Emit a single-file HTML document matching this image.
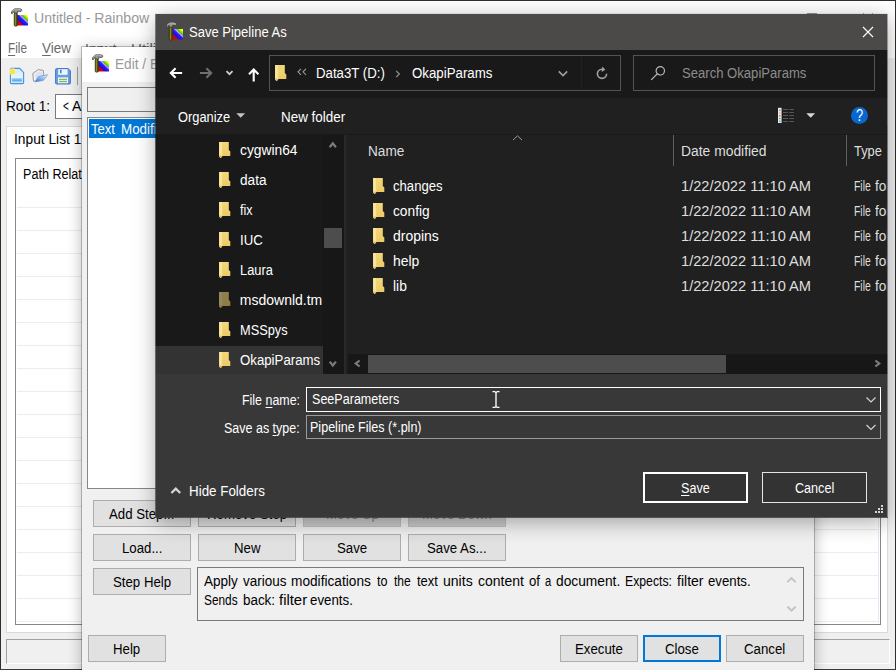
<!DOCTYPE html>
<html><head><meta charset="utf-8"><title>Save Pipeline As</title>
<style>
*{box-sizing:border-box;margin:0;padding:0}
html,body{width:896px;height:670px;overflow:hidden;background:#fff}
body{font-family:"Liberation Sans",sans-serif;font-size:14px;line-height:18px;position:relative}
.a{position:absolute}
.t{position:absolute;white-space:nowrap;transform-origin:0 50%;height:18px}
u{text-decoration:underline;text-underline-offset:1.5px;text-decoration-thickness:1px}
#main{position:absolute;left:0;top:0;width:896px;height:670px;background:#f0f0f0;overflow:hidden}
#edit{position:absolute;left:82px;top:47px;width:732px;height:640px;background:#f0f0f0;
 box-shadow:0 0 0 1px rgba(0,0,0,.22),0 2px 14px 0 rgba(0,0,0,.30)}
#save{position:absolute;left:156px;top:14px;width:731px;height:503px;background:#383838;overflow:hidden;
 box-shadow:0 0 0 1px rgba(0,0,0,.06),0 5px 20px 0 rgba(0,0,0,.34)}
.btn{position:absolute;background:#e1e1e1;border:1px solid #adadad}
.dbtn{position:absolute;background:#333;border:1px solid #e6e6e6}
#tree{position:absolute;left:0;top:120px;width:188px;height:240px;background:#191919;overflow:hidden}
#flist{position:absolute;left:192px;top:120px;width:540px;height:240px;background:#202020;overflow:hidden}
</style></head><body>

<div id="main">
  <div class="a" style="left:0;top:0;width:896px;height:58px;background:#fff"></div>
  <div class="a" style="left:807px;top:13px;width:10px;height:1px;background:#999"></div><div class="a" style="left:863px;top:13px;width:1px;height:1px;background:#aaa"></div><div class="a" style="left:872px;top:13px;width:1px;height:1px;background:#aaa"></div>
  <!-- app icon -->
  <svg class="a" style="left:10px;top:7px" width="20" height="21" viewBox="0 0 20 21">
    <defs><linearGradient id="rb" x1="0" y1="1" x2="1" y2="0">
      <stop offset="0" stop-color="#e00000"/><stop offset=".26" stop-color="#c80020"/><stop offset=".36" stop-color="#1010e0"/><stop offset=".56" stop-color="#2828ff"/><stop offset=".63" stop-color="#ff90ff"/><stop offset=".70" stop-color="#20d020"/><stop offset=".82" stop-color="#b0f000"/><stop offset=".9" stop-color="#ffff20"/><stop offset="1" stop-color="#ffff60"/></linearGradient></defs>
    <rect x="7" y="8" width="11" height="10.5" fill="url(#rb)"/>
    <path d="M1.3 6.4 C1.4 3.4 4 1.3 7.5 1.5 L10.4 1.9 C11.4 2.1 11.9 2.8 11.7 3.6 C11.5 4.4 10.8 4.7 9.9 4.5 L7.6 4.2 L7.6 6.2 L4.1 6.2 L4.3 4.3 C3.3 4.7 2.7 5.5 2.3 6.7 Z" fill="#9a9a9a" stroke="#333" stroke-width=".7"/>
    <path d="M2.2 4 C3.4 2.4 5.4 1.8 7.6 2 L10.4 2.4" fill="none" stroke="#c9c9c9" stroke-width=".8"/>
    <rect x="4.1" y="6" width="3.3" height="13.2" rx="1.3" fill="#55550f" stroke="#2a2a08" stroke-width=".5"/>
    <rect x="5" y="6.5" width="1" height="12" fill="#8a8a2c"/>
  </svg>
  <!-- toolbar icons -->
  <svg class="a" style="left:9px;top:67px" width="16" height="18" viewBox="0 0 16 18">
    <defs><linearGradient id="pg" x1="0" y1="0" x2="0" y2="1"><stop offset="0" stop-color="#d4e9fb"/><stop offset="1" stop-color="#f4faff"/></linearGradient></defs>
    <path d="M2.2 1.4 H10.6 L14.6 5.4 V15.6 Q14.6 16.6 13.6 16.6 H2.2 Q1.4 16.6 1.4 15.6 V2.2 Q1.4 1.4 2.2 1.4 Z" fill="url(#pg)" stroke="#4d8fd8" stroke-width="1.1"/>
    <rect x="2.6" y="11.2" width="10.8" height="4.2" fill="#8fcdf6"/>
    <rect x="3.4" y="12.6" width="9.2" height="1.2" fill="#4fa8ea"/>
    <circle cx="3.4" cy="4.6" r="3.6" fill="#fdf6a0" opacity=".7"/>
    <circle cx="3.4" cy="4.6" r="2.6" fill="#f5e646"/>
  </svg>
  <svg class="a" style="left:32px;top:68px" width="17" height="16" viewBox="0 0 17 16">
    <defs><linearGradient id="og" x1="0" y1="1" x2="1" y2="0"><stop offset="0" stop-color="#1f6fe0"/><stop offset=".45" stop-color="#7fb2f0"/><stop offset="1" stop-color="#f4f8fd"/></linearGradient></defs>
    <path d="M.8 5.4 L6.4 1.6 L11.3 2.5 L11.7 6.6 L3.7 13.4 L1.5 13 Z" fill="#f3f5f7" stroke="#878d96" stroke-width=".9"/>
    <path d="M2.2 6.2 L6.6 3.2 L10.4 3.8 L10.6 6.6 L4 11.6 Z" fill="#dfe4ea"/>
    <path d="M2.8 13.9 L6.4 8.5 L15.6 6.7 L11.3 12.5 Z" fill="url(#og)" stroke="#7a96bd" stroke-width=".7"/>
  </svg>
  <svg class="a" style="left:55px;top:68px" width="16" height="17" viewBox="0 0 16 17">
    <path d="M1.6 .6 H13.2 L15.4 2.8 V15 Q15.4 16 14.4 16 H1.6 Q.6 16 .6 15 V1.6 Q.6 .6 1.6 .6 Z" fill="#6a9de2" stroke="#3f76c8" stroke-width="1"/>
    <rect x="3.2" y="1.2" width="9.4" height="5.6" fill="#eef4fc"/>
    <rect x="5" y="1.8" width="1.6" height="3.4" fill="#4a7fd0"/>
    <rect x="3" y="9.4" width="10" height="5.8" fill="#f4f6f8"/>
    <rect x="4" y="10.8" width="8" height="1.3" fill="#7cc05a"/><rect x="4" y="12.9" width="8" height="1.3" fill="#7cc05a"/>
  </svg>
  <div class="a" style="left:77px;top:67px;width:1px;height:18px;background:#a0a0a0"></div>
  <!-- root text box -->
  <div class="a" style="left:55px;top:94px;width:200px;height:25px;background:#fff;border:1px solid #7a7a7a"></div>
  <!-- tab control -->
  <div class="a" style="left:6px;top:126px;width:882px;height:507px;background:#fff;border:1px solid #dadada"></div>
  <!-- table -->
  <div class="a" style="left:15px;top:158px;width:866px;height:467px;background:#fff;border:1px solid #828790"><div class="a" style="left:1px;top:26px;width:862px;height:438px;background-image:repeating-linear-gradient(to bottom,transparent 0,transparent 22px,#ececec 22px,#ececec 23px)"></div></div>
  <div class="a" style="left:878px;top:160px;width:1px;height:463px;background:#e3ecf6"></div>
  <!-- status bar -->
  <div class="a" style="left:6px;top:639px;width:884px;height:25px;background:#f0f0f0;border-top:1px solid #a0a0a0;border-left:1px solid #a0a0a0;border-right:1px solid #fff;border-bottom:1px solid #fff"></div>
<span class="t" style="top:9px;left:33.9px;color:#999;transform:scaleX(1.007);">Untitled - Rainbow</span>
<span class="t" style="top:39px;left:7.8px;color:#6a6a6a;transform:scaleX(0.839);"><u>F</u>ile</span>
<span class="t" style="top:39px;left:41.6px;color:#6a6a6a;transform:scaleX(0.963);"><u>V</u>iew</span>
<span class="t" style="top:40px;left:84.8px;color:#6a6a6a;transform:scaleX(1.006);"><u>I</u>nput</span>
<span class="t" style="top:40px;left:131.0px;color:#6a6a6a;transform:scaleX(1.078);"><u>U</u>tilities</span>
<span class="t" style="top:97px;left:5.8px;color:#000;transform:scaleX(0.976);">Root 1:</span>
<span class="t" style="top:97px;left:63.3px;color:#000;transform:scaleX(0.713);">&lt;</span>
<span class="t" style="top:97px;left:72.2px;color:#000;transform:scaleX(1.008);">Auto&gt;</span>
<span class="t" style="top:130px;left:14.0px;color:#000;transform:scaleX(0.983);">Input List 1</span>
<span class="t" style="top:165px;left:22.8px;color:#000;transform:scaleX(0.900);">Path Relative</span>
  <div class="a" style="left:0;top:0;width:896px;height:670px;border:1px solid #2e2e2e;border-bottom-color:#3a3a3a"></div>
</div>

<div id="edit">
  <div class="a" style="left:0;top:0;width:732px;height:35px;background:#fff"></div>
  <svg class="a" style="left:9px;top:5.8px" width="20" height="21" viewBox="0 0 20 21">
    <rect x="7" y="8" width="11" height="10.5" fill="url(#rb)"/>
    <path d="M1.3 6.4 C1.4 3.4 4 1.3 7.5 1.5 L10.4 1.9 C11.4 2.1 11.9 2.8 11.7 3.6 C11.5 4.4 10.8 4.7 9.9 4.5 L7.6 4.2 L7.6 6.2 L4.1 6.2 L4.3 4.3 C3.3 4.7 2.7 5.5 2.3 6.7 Z" fill="#9a9a9a" stroke="#333" stroke-width=".7"/>
    <path d="M2.2 4 C3.4 2.4 5.4 1.8 7.6 2 L10.4 2.4" fill="none" stroke="#c9c9c9" stroke-width=".8"/>
    <rect x="4.1" y="6" width="3.3" height="13.2" rx="1.3" fill="#55550f" stroke="#2a2a08" stroke-width=".5"/>
    <rect x="5" y="6.5" width="1" height="12" fill="#8a8a2c"/>
  </svg>
  <div class="a" style="left:5px;top:40px;width:720px;height:25px;background:#f0f0f0;border:1px solid #7a7a7a"></div>
  <div class="a" style="left:5px;top:70px;width:720px;height:372px;background:#fff;border:1px solid #828790"></div>
  <div class="a" style="left:7px;top:72px;width:716px;height:19px;background:#0078d7"></div>
  <div class="btn" style="left:11px;top:453px;width:98px;height:27px"></div>
  <div class="btn" style="left:116px;top:453px;width:98px;height:27px"></div>
  <div class="btn" style="left:221px;top:453px;width:98px;height:27px;background:#cccccc;border-color:#bfbfbf"></div>
  <div class="btn" style="left:326px;top:453px;width:98px;height:27px;background:#cccccc;border-color:#bfbfbf"></div>
  <div class="btn" style="left:11px;top:487px;width:98px;height:27px"></div>
  <div class="btn" style="left:116px;top:487px;width:98px;height:27px"></div>
  <div class="btn" style="left:221px;top:487px;width:98px;height:27px"></div>
  <div class="btn" style="left:326px;top:487px;width:98px;height:27px"></div>
  <div class="btn" style="left:11px;top:521px;width:98px;height:27px"></div>
  <div class="a" style="left:115px;top:520.3px;width:607px;height:54px;background:#f0f0f0;border:1px solid #7a7a7a"></div>
  <svg class="a" style="left:699.2px;top:521px" width="21" height="51" viewBox="0 0 21 51">
    <path d="M6.3 14.2 L10.5 10 L14.7 14.2 M6.3 38.5 L10.5 42.7 L14.7 38.5" fill="none" stroke="#c4c4c4" stroke-width="1.9"/>
  </svg>
  <div class="btn" style="left:6.4px;top:588px;width:77.4px;height:27px"></div>
  <div class="btn" style="left:478.2px;top:588px;width:77.6px;height:27px"></div>
  <div class="btn" style="left:561px;top:588px;width:78px;height:27px;border:2px solid #0078d7"></div>
  <div class="btn" style="left:644.2px;top:588px;width:77.6px;height:27px"></div>
<span class="t" style="top:8px;left:32.9px;color:#999;transform:scaleX(0.976);">Edit / Execute Pipeline</span>
<span class="t" style="top:73px;left:9.0px;color:#fff;transform:scaleX(0.931);">Text</span>
<span class="t" style="top:73px;left:38.7px;color:#fff;transform:scaleX(0.957);">Modification</span>
<span class="t" style="top:458px;left:27.4px;color:#000;transform:scaleX(0.945);">Add Step...</span>
<span class="t" style="top:458px;left:124.8px;color:#000;transform:scaleX(0.945);">Remove Step</span>
<span class="t" style="top:458px;left:243.5px;color:#838383;transform:scaleX(0.945);">Move Up</span>
<span class="t" style="top:458px;left:340.0px;color:#838383;transform:scaleX(0.945);">Move Down</span>
<span class="t" style="top:492px;left:39.7px;color:#000;transform:scaleX(0.945);">Load...</span>
<span class="t" style="top:492px;left:151.8px;color:#000;transform:scaleX(0.945);">New</span>
<span class="t" style="top:492px;left:254.9px;color:#000;transform:scaleX(0.945);">Save</span>
<span class="t" style="top:492px;left:345.2px;color:#000;transform:scaleX(0.945);">Save As...</span>
<span class="t" style="top:526px;left:31.2px;color:#000;transform:scaleX(0.945);">Step Help</span>
<span class="t" style="top:593px;left:31.4px;color:#000;transform:scaleX(0.945);">Help</span>
<span class="t" style="top:593px;left:492.9px;color:#000;transform:scaleX(0.945);">Execute</span>
<span class="t" style="top:593px;left:583.0px;color:#000;transform:scaleX(0.945);">Close</span>
<span class="t" style="top:593px;left:662.2px;color:#000;transform:scaleX(0.945);">Cancel</span>
<span class="t" style="top:525px;left:122.2px;color:#000;transform:scaleX(0.966);">Apply</span>
<span class="t" style="top:525px;left:161.0px;color:#000;transform:scaleX(0.964);">various</span>
<span class="t" style="top:525px;left:208.9px;color:#000;transform:scaleX(0.977);">modifications</span>
<span class="t" style="top:525px;left:294.5px;color:#000;transform:scaleX(0.900);">to</span>
<span class="t" style="top:525px;left:311.5px;color:#000;transform:scaleX(0.863);">the</span>
<span class="t" style="top:525px;left:335.4px;color:#000;transform:scaleX(0.926);">text</span>
<span class="t" style="top:525px;left:361.2px;color:#000;transform:scaleX(1.003);">units</span>
<span class="t" style="top:525px;left:396.1px;color:#000;transform:scaleX(0.998);">content</span>
<span class="t" style="top:525px;left:447.0px;color:#000;transform:scaleX(0.942);">of</span>
<span class="t" style="top:525px;left:462.5px;color:#000;transform:scaleX(0.800);">a</span>
<span class="t" style="top:525px;left:473.9px;color:#000;transform:scaleX(0.983);">document.</span>
<span class="t" style="top:525px;left:542.8px;color:#000;transform:scaleX(0.874);">Expects:</span>
<span class="t" style="top:525px;left:595.0px;color:#000;transform:scaleX(1.004);">filter</span>
<span class="t" style="top:525px;left:626.0px;color:#000;transform:scaleX(0.944);">events.</span>
<span class="t" style="top:544px;left:122.2px;color:#000;transform:scaleX(0.845);">Sends</span>
<span class="t" style="top:544px;left:161.0px;color:#000;transform:scaleX(0.958);">back:</span>
<span class="t" style="top:544px;left:196.9px;color:#000;transform:scaleX(1.062);">filter</span>
<span class="t" style="top:544px;left:228.0px;color:#000;transform:scaleX(0.949);">events.</span>
</div>

<div id="save">
  <div class="a" style="left:0;top:0;width:732px;height:36px;background:#4c4a48"></div>
  <svg class="a" style="left:9px;top:7px" width="20" height="21" viewBox="0 0 20 21">
    <rect x="7" y="8" width="11" height="10.5" fill="url(#rb)"/>
    <path d="M1.3 6.4 C1.4 3.4 4 1.3 7.5 1.5 L10.4 1.9 C11.4 2.1 11.9 2.8 11.7 3.6 C11.5 4.4 10.8 4.7 9.9 4.5 L7.6 4.2 L7.6 6.2 L4.1 6.2 L4.3 4.3 C3.3 4.7 2.7 5.5 2.3 6.7 Z" fill="#9a9a9a" stroke="#333" stroke-width=".7"/>
    <path d="M2.2 4 C3.4 2.4 5.4 1.8 7.6 2 L10.4 2.4" fill="none" stroke="#c9c9c9" stroke-width=".8"/>
    <rect x="4.1" y="6" width="3.3" height="13.2" rx="1.3" fill="#55550f" stroke="#2a2a08" stroke-width=".5"/>
    <rect x="5" y="6.5" width="1" height="12" fill="#8a8a2c"/>
  </svg>
  <svg class="a" style="left:706px;top:12px" width="12" height="12" viewBox="0 0 12 12"><path d="M1 1 L11 11 M11 1 L1 11" stroke="#fff" stroke-width="1.1"/></svg>
  <!-- nav bar -->
  <div class="a" style="left:0;top:36px;width:732px;height:48px;background:#191919"></div>
  <svg class="a" style="left:12px;top:50px" width="100" height="20" viewBox="0 0 100 20">
    <path d="M7.6 4.2 L2.8 9 L7.6 13.8 M3 9 H14.1" fill="none" stroke="#fff" stroke-width="2.1"/>
    <path d="M38.4 4.2 L43.2 9 L38.4 13.8 M43 9 H31.9" fill="none" stroke="#6e6e6e" stroke-width="2.1"/>
    <path d="M58.5 7.2 L61.5 10.2 L64.5 7.2" fill="none" stroke="#d0d0d0" stroke-width="1.7"/>
    <path d="M81 10.2 L85.7 5.5 L90.4 10.2 M85.7 5.7 V17.6" fill="none" stroke="#fff" stroke-width="2.1"/>
  </svg>
  <div class="a" style="left:113px;top:41px;width:352px;height:36px;border:1px solid #535353"></div>
  <div class="a" style="left:425px;top:42px;width:1px;height:34px;background:#212121"></div>
  <svg class="a fold" style="left:118px;top:51px" width="13" height="17" viewBox="0 0 13 17"><use href="#fo"/></svg>
  <svg class="a" style="left:140px;top:54px" width="12" height="8" viewBox="0 0 12 8"><path d="M5 .8 L2 3.8 L5 6.8 M10 .8 L7 3.8 L10 6.8" fill="none" stroke="#9a9a9a" stroke-width="1.1"/></svg>
  <svg class="a" style="left:239px;top:56px" width="6" height="8" viewBox="0 0 6 8"><path d="M1.2 1 L4.4 4 L1.2 7" fill="none" stroke="#8e8e8e" stroke-width="1.2"/></svg>
  <svg class="a" style="left:401px;top:56px" width="12" height="8" viewBox="0 0 12 8"><path d="M1.8 1.4 L6 5.6 L10.2 1.4" fill="none" stroke="#a0a0a0" stroke-width="1.6"/></svg>
  <svg class="a" style="left:439px;top:52px" width="14" height="15" viewBox="0 0 14 15"><path d="M7 3.2 A4.6 4.6 0 1 0 11.6 7.8" fill="none" stroke="#a2a2a2" stroke-width="1.6"/><path d="M7 .4 L10.4 3.2 L7 6 Z" fill="#a2a2a2" transform="rotate(8 7 3)"/></svg>
  <div class="a" style="left:477px;top:41px;width:242px;height:36px;border:1px solid #535353"></div>
  <svg class="a" style="left:494px;top:51px" width="16" height="16" viewBox="0 0 16 16"><circle cx="10.3" cy="5.8" r="4.2" fill="none" stroke="#b8b8b8" stroke-width="1.2"/><path d="M7.2 8.9 L1.2 14.9" stroke="#b8b8b8" stroke-width="1.3"/></svg>
  <!-- toolbar -->
  <div class="a" style="left:0;top:84px;width:732px;height:36px;background:#202020"></div>
  <svg class="a" style="left:80px;top:99px" width="10" height="6" viewBox="0 0 10 6"><path d="M.3 .2 H9.1 L4.7 4.8 Z" fill="#c4c4c4"/></svg>
  <svg class="a" style="left:621px;top:93px" width="18" height="17" viewBox="0 0 18 17">
    <rect x="1" y=".8" width="3.6" height="15.2" fill="#e8e8e8"/>
    <rect x="2.2" y="2.6" width="1.2" height="1.2" fill="#3a7bd0"/><rect x="2.2" y="5.4" width="1.2" height="1.2" fill="#e0a030"/><rect x="2.2" y="8.2" width="1.2" height="1.2" fill="#d03030"/><rect x="2.2" y="11" width="1.2" height="1.2" fill="#40a040"/><rect x="2.2" y="13.6" width="1.2" height="1.2" fill="#3a7bd0"/>
    <path d="M6 2.5 H17 M6 5.5 H17 M6 8.5 H17 M6 11.5 H17 M6 14.5 H17" stroke="#565656" stroke-width="1.2" stroke-dasharray="5 1.2"/>
  </svg>
  <svg class="a" style="left:650px;top:99px" width="10" height="6" viewBox="0 0 10 6"><path d="M.3 .2 H9.1 L4.7 4.8 Z" fill="#d8d8d8"/></svg>
  <div class="a" style="left:694.5px;top:92.5px;width:17.6px;height:17.6px;border-radius:50%;background:#0867d0"></div>
  <!-- tree -->
  <div id="tree">
    <div class="a" style="left:0;top:212px;width:167px;height:28px;background:#333"></div>
    <div class="a" style="left:167px;top:0;width:21px;height:240px;background:#171717"></div>
    <div class="a" style="left:168px;top:94px;width:18px;height:20px;background:#4d4d4d"></div>
    <svg class="a" style="left:171px;top:6px" width="12" height="230" viewBox="0 0 12 230"><path d="M2.7 7.2 L5.8 3.3 L8.9 7.2" fill="none" stroke="#7c7c7c" stroke-width="2.2"/><path d="M2.7 221.6 L5.8 225.5 L8.9 221.6" fill="none" stroke="#7c7c7c" stroke-width="2.2"/></svg>
    <svg class="a" style="left:61.6px;top:8px;" width="13" height="17" viewBox="0 0 13 17"><use href="#fo"/></svg>
    <svg class="a" style="left:61.6px;top:38px;" width="13" height="17" viewBox="0 0 13 17"><use href="#fo"/></svg>
    <svg class="a" style="left:61.6px;top:68px;" width="13" height="17" viewBox="0 0 13 17"><use href="#fo"/></svg>
    <svg class="a" style="left:61.6px;top:98px;" width="13" height="17" viewBox="0 0 13 17"><use href="#fo"/></svg>
    <svg class="a" style="left:61.6px;top:128px;" width="13" height="17" viewBox="0 0 13 17"><use href="#fo"/></svg>
    <svg class="a" style="left:61.6px;top:158px;opacity:.55;" width="13" height="17" viewBox="0 0 13 17"><use href="#fo"/></svg>
    <svg class="a" style="left:61.6px;top:188px;" width="13" height="17" viewBox="0 0 13 17"><use href="#fo"/></svg>
    <svg class="a" style="left:61.6px;top:218px;" width="13" height="17" viewBox="0 0 13 17"><use href="#fo"/></svg>
<span class="t" style="top:7px;left:83.8px;color:#fff;transform:scaleX(0.986);">cygwin64</span>
<span class="t" style="top:37px;left:83.8px;color:#fff;transform:scaleX(0.974);">data</span>
<span class="t" style="top:67px;left:83.8px;color:#fff;transform:scaleX(0.893);">fix</span>
<span class="t" style="top:97px;left:83.8px;color:#fff;transform:scaleX(0.942);">IUC</span>
<span class="t" style="top:127px;left:83.8px;color:#fff;transform:scaleX(0.919);">Laura</span>
<span class="t" style="top:157px;left:83.8px;color:#fff;transform:scaleX(1.000);">msdownld.tm</span>
<span class="t" style="top:187px;left:83.8px;color:#fff;transform:scaleX(0.912);">MSSpys</span>
<span class="t" style="top:217px;left:83.8px;color:#fff;transform:scaleX(0.945);">OkapiParams</span>
  </div>
  <div class="a" style="left:188px;top:120px;width:4px;height:240px;background:#202020"></div>
  <div class="a" style="left:188px;top:121px;width:2px;height:239px;background:#292929"></div>
  <!-- file list -->
  <div id="flist">
    <div class="a" style="left:325px;top:1px;width:1px;height:31px;background:#5e5e5e"></div>
    <div class="a" style="left:498px;top:1px;width:1px;height:31px;background:#5e5e5e"></div>
    <svg class="a" style="left:164px;top:1px" width="11" height="6" viewBox="0 0 11 6"><path d="M1 5 L5.5 .9 L10 5" fill="none" stroke="#9a9a9a" stroke-width="1"/></svg>
    <div class="a" style="left:0;top:220px;width:540px;height:20px;background:#171717"></div>
    <div class="a" style="left:20px;top:221px;width:358px;height:18px;background:#4d4d4d"></div>
    <svg class="a" style="left:6px;top:224.2px" width="8" height="10" viewBox="0 0 8 10"><path d="M5.6 2.5 L1.8 5.5 L5.6 8.5" fill="none" stroke="#7c7c7c" stroke-width="2.2"/></svg>
    <svg class="a" style="left:525px;top:224.2px" width="8" height="10" viewBox="0 0 8 10"><path d="M2.4 2.5 L6.2 5.5 L2.4 8.5" fill="none" stroke="#7c7c7c" stroke-width="2.2"/></svg>
    <svg class="a" style="left:23.5px;top:44px" width="13" height="17" viewBox="0 0 13 17"><use href="#fo"/></svg>
    <svg class="a" style="left:23.5px;top:69px" width="13" height="17" viewBox="0 0 13 17"><use href="#fo"/></svg>
    <svg class="a" style="left:23.5px;top:94px" width="13" height="17" viewBox="0 0 13 17"><use href="#fo"/></svg>
    <svg class="a" style="left:23.5px;top:119px" width="13" height="17" viewBox="0 0 13 17"><use href="#fo"/></svg>
    <svg class="a" style="left:23.5px;top:144px" width="13" height="17" viewBox="0 0 13 17"><use href="#fo"/></svg>
<span class="t" style="top:43px;left:505.8px;color:#dedede;transform:scaleX(0.743);">File</span>
<span class="t" style="top:43px;left:527.2px;color:#dedede;transform:scaleX(0.971);">folder</span>
<span class="t" style="top:68px;left:505.8px;color:#dedede;transform:scaleX(0.743);">File</span>
<span class="t" style="top:68px;left:527.2px;color:#dedede;transform:scaleX(0.971);">folder</span>
<span class="t" style="top:93px;left:505.8px;color:#dedede;transform:scaleX(0.743);">File</span>
<span class="t" style="top:93px;left:527.2px;color:#dedede;transform:scaleX(0.971);">folder</span>
<span class="t" style="top:118px;left:505.8px;color:#dedede;transform:scaleX(0.743);">File</span>
<span class="t" style="top:118px;left:527.2px;color:#dedede;transform:scaleX(0.971);">folder</span>
<span class="t" style="top:143px;left:505.8px;color:#dedede;transform:scaleX(0.743);">File</span>
<span class="t" style="top:143px;left:527.2px;color:#dedede;transform:scaleX(0.971);">folder</span>
  </div>
  <div class="a" style="left:0;top:120px;width:732px;height:1px;background:#1a1a1a"></div>
  <!-- bottom panel -->
  <div class="a" style="left:150px;top:373px;width:575px;height:25px;border:1px solid #fff;background:#383838"></div>
  <div class="a" style="left:150px;top:400.6px;width:575px;height:24.4px;border:1px solid #9b9b9b;background:#383838"></div>
  <svg class="a" style="left:709px;top:382px" width="12" height="36" viewBox="0 0 12 36"><path d="M1.5 1.5 L6 6 L10.5 1.5 M1.5 29 L6 33.5 L10.5 29" fill="none" stroke="#d8d8d8" stroke-width="1.1"/></svg>
  <svg class="a" style="left:336px;top:377px" width="8" height="17" viewBox="0 0 8 17"><path d="M.5 .5 H3 M5 .5 H7.5 M.5 16.5 H3 M5 16.5 H7.5 M4 1 V16 M3 .8 Q4 1 4 2 Q4 1 5 .8 M3 16.2 Q4 16 4 15 Q4 16 5 16.2" fill="none" stroke="#fff" stroke-width="1.35"/></svg>
  <svg class="a" style="left:14px;top:472px" width="12" height="9" viewBox="0 0 12 9"><path d="M1.4 7 L5.8 2.6 L10.2 7" fill="none" stroke="#d4d4d4" stroke-width="2.3"/></svg>
  <div class="dbtn" style="left:487px;top:458.4px;width:105px;height:30.6px;border:2px solid #fff"></div>
  <div class="dbtn" style="left:606px;top:458.4px;width:105.2px;height:30.6px"></div>
  <svg class="a" style="left:718px;top:490px" width="10" height="10" viewBox="0 0 10 10"><g fill="#d6d6d6"><rect x="7" y="1" width="2" height="2"/><rect x="4" y="4" width="2" height="2"/><rect x="7" y="4" width="2" height="2"/><rect x="1" y="7" width="2" height="2"/><rect x="4" y="7" width="2" height="2"/><rect x="7" y="7" width="2" height="2"/></g></svg>
<span class="t" style="top:9px;left:32.9px;color:#fff;transform:scaleX(0.930);">Save Pipeline As</span>
<span class="t" style="top:50px;left:159.8px;color:#fff;transform:scaleX(0.945);">Data3T (D:)</span>
<span class="t" style="top:50px;left:255.5px;color:#fff;transform:scaleX(0.948);">OkapiParams</span>
<span class="t" style="top:50px;left:525.8px;color:#8c8c8c;transform:scaleX(0.935);">Search OkapiParams</span>
<span class="t" style="top:94px;left:22.1px;color:#fff;transform:scaleX(0.918);">Organize</span>
<span class="t" style="top:94px;left:124.8px;color:#fff;transform:scaleX(0.960);">New folder</span>
<span class="t" style="top:128px;left:211.5px;color:#dedede;transform:scaleX(0.973);">Name</span>
<span class="t" style="top:128px;left:525.0px;color:#dedede;transform:scaleX(0.990);">Date modified</span>
<span class="t" style="top:128px;left:697.9px;color:#dedede;transform:scaleX(0.917);">Type</span>
<span class="t" style="top:163px;left:236.7px;color:#fff;transform:scaleX(0.936);">changes</span>
<span class="t" style="top:163px;left:525.0px;color:#dedede;transform:scaleX(1.046);">1/22/2022 11:10 AM</span>
<span class="t" style="top:188px;left:236.7px;color:#fff;transform:scaleX(0.981);">config</span>
<span class="t" style="top:188px;left:525.0px;color:#dedede;transform:scaleX(1.046);">1/22/2022 11:10 AM</span>
<span class="t" style="top:213px;left:236.7px;color:#fff;transform:scaleX(0.996);">dropins</span>
<span class="t" style="top:213px;left:525.0px;color:#dedede;transform:scaleX(1.046);">1/22/2022 11:10 AM</span>
<span class="t" style="top:238px;left:236.7px;color:#fff;transform:scaleX(0.992);">help</span>
<span class="t" style="top:238px;left:525.0px;color:#dedede;transform:scaleX(1.046);">1/22/2022 11:10 AM</span>
<span class="t" style="top:263px;left:236.7px;color:#fff;transform:scaleX(0.986);">lib</span>
<span class="t" style="top:263px;left:525.0px;color:#dedede;transform:scaleX(1.046);">1/22/2022 11:10 AM</span>
<span class="t" style="top:377px;left:85.8px;color:#fff;transform:scaleX(0.888);">File <u>n</u>ame:</span>
<span class="t" style="top:405px;left:67.7px;color:#fff;transform:scaleX(0.892);">Save as <u>t</u>ype:</span>
<span class="t" style="top:376px;left:155.5px;color:#fff;transform:scaleX(0.897);">SeeParameters</span>
<span class="t" style="top:404px;left:153.5px;color:#fff;transform:scaleX(0.896);">Pipeline Files (*.pln)</span>
<span class="t" style="top:468px;left:32.9px;color:#fff;transform:scaleX(0.956);">Hide Folders</span>
<span class="t" style="top:465px;left:525.1px;color:#fff;transform:scaleX(0.900);"><u>S</u>ave</span>
<span class="t" style="top:465px;left:638.7px;color:#fff;transform:scaleX(0.900);">Cancel</span>
  <span class="t" style="left:700.4px;top:93px;color:#fff;font-size:16px;transform:scaleX(.8)">?</span>
</div>
<div class="a" style="left:155px;top:14px;width:1px;height:503px;opacity:.65;background:linear-gradient(to bottom,#4c4a48 0,#4c4a48 36px,#191919 36px,#191919 84px,#202020 84px,#202020 120px,#191919 120px,#191919 332px,#333 332px,#333 360px,#383838 360px)"></div>
<div class="a" style="left:887px;top:14px;width:1px;height:503px;opacity:.4;background:linear-gradient(to bottom,#4c4a48 0,#4c4a48 36px,#191919 36px,#191919 84px,#202020 84px,#202020 340px,#171717 340px,#171717 360px,#383838 360px)"></div>
<div class="a" style="left:155px;top:517px;width:733px;height:1px;opacity:.75;background:#383838"></div>
<svg width="0" height="0" style="position:absolute"><defs>
  <linearGradient id="fg" x1="0" y1="0" x2="0" y2="1"><stop offset="0" stop-color="#f3d777"/><stop offset="1" stop-color="#ecc964"/></linearGradient><linearGradient id="fl" x1="0" y1="0" x2="1" y2="0"><stop offset="0" stop-color="#f5dd8c"/><stop offset=".6" stop-color="#f8e7a6"/><stop offset="1" stop-color="#f2d678"/></linearGradient>
  <g id="fo"><path d="M1 .1 H10.8 V8.1 L12.3 9.6 V13.9 H4.3 L2.75 16.1 L1 14.6 Z" fill="url(#fg)"/><path d="M1 .1 H4.2 L4.6 13.9 H4.3 L2.75 16.1 L1 14.6 Z" fill="url(#fl)"/><path d="M1 13.6 L4.4 13.9 L2.75 16.1 L1 14.6 Z" fill="#dcb854"/></g>
</defs></svg>
</body></html>
